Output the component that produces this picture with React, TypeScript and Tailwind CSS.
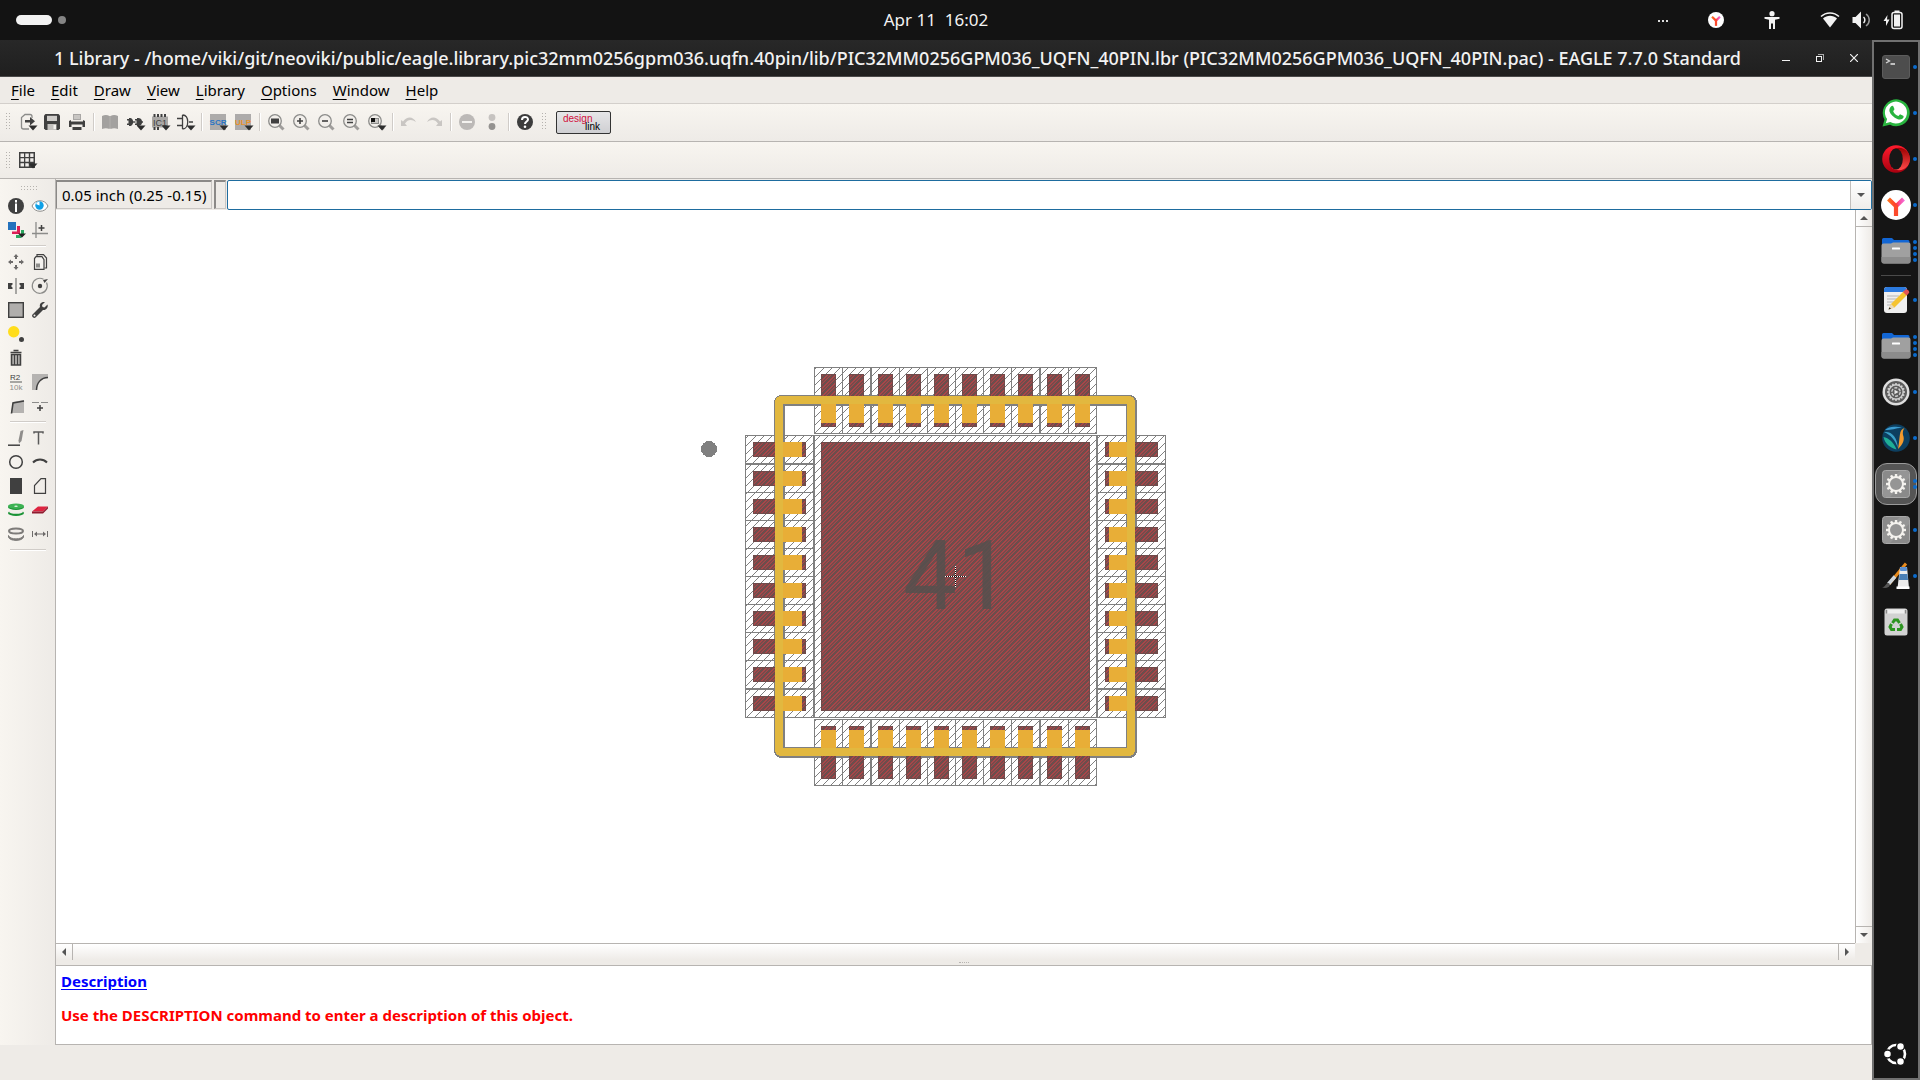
import React from "react";

type Kids = { children?: React.ReactNode };

const dark = "#404040";
const mid = "#8c8c8a";

/* ---------- shared pieces ---------- */

function Icon({ children }: Kids) {
  return (
    <svg viewBox="0 0 16 16" className="size-4 shrink-0 overflow-visible" fill="none" aria-hidden="true">
      {children}
    </svg>
  );
}

function Caret() {
  return <path d="M9.5 11.5h9l-4.5 5z" fill="#2d2d2d" />;
}

function ToolButton({ label, children }: Kids & { label: string }) {
  return (
    <button type="button" aria-label={label} className="flex h-6 w-[25px] shrink-0 items-center pl-1">
      <Icon>{children}</Icon>
    </button>
  );
}

function Separator() {
  return (
    <div className="flex h-[18px] w-2 shrink-0 justify-center">
      <div className="w-0.5 border-r border-l border-r-white border-l-[#d0ccc8]" />
    </div>
  );
}

function Handle() {
  return (
    <svg className="h-[17px] w-[5px] shrink-0" viewBox="0 0 5 17" aria-hidden="true" shapeRendering="crispEdges">
      {[0, 3, 6, 9, 12, 15].map((y) => (
        <path key={y} d={`M0 ${y}h1v1h-1zM3 ${y}h1v1h-1z`} fill="#b5b2ae" />
      ))}
    </svg>
  );
}

function Magnifier({ children }: Kids) {
  return (
    <>
      <path d="M11.5 11.5l4 4" stroke="#a09e9c" strokeWidth="3" />
      <circle cx="7" cy="7" r="6.3" stroke={mid} strokeWidth="1.3" fill="#f2efeb" />
      {children}
    </>
  );
}

/* ---------- top bar ---------- */

function YandexMark({ id, className }: { id: string; className: string }) {
  return (
    <svg viewBox="0 0 30 30" className={className} aria-hidden="true">
      <defs>
        <linearGradient id={id} x1="6" y1="8" x2="24" y2="8" gradientUnits="userSpaceOnUse">
          <stop offset="0" stopColor="#ff7a1a" />
          <stop offset="0.5" stopColor="#ff3b2f" />
          <stop offset="0.7" stopColor="#f94fa0" />
          <stop offset="1" stopColor="#f472e0" />
        </linearGradient>
      </defs>
      <circle cx="15" cy="15" r="15" fill="#fff" />
      <path d="M7.5 9l7.5 7.2L22.5 9" fill="none" stroke={`url(#${id})`} strokeWidth="4.2" />
      <path d="M15 15v11" fill="none" stroke="#fc4a2c" strokeWidth="4.2" />
    </svg>
  );
}

function TopBar() {
  return (
    <header className="grid h-10 shrink-0 grid-cols-[1fr_auto_1fr] items-center bg-[#131313] text-[#f2f2f2]">
      <div className="flex items-center gap-1.5 pl-4">
        <span className="h-2.5 w-9 rounded-full bg-[#f2f2f2]" />
        <span className="size-2 rounded-full bg-[#858585]" />
      </div>
      <time className="pr-12 font-['Noto_Sans'] text-[17px] leading-6 whitespace-pre">Apr 11  16:02</time>
      <div className="flex items-center justify-end pr-[17px]">
        <span className="mr-10 flex gap-0.5 pt-0.5">
          <i className="size-0.5 bg-[#ddd]" />
          <i className="size-0.5 bg-[#ddd]" />
          <i className="size-0.5 bg-[#ddd]" />
        </span>
        <YandexMark id="tray-y" className="mr-10 size-4" />
        <svg viewBox="0 0 16 18" className="mr-10 h-[18px] w-4" fill="#f2f2f2" aria-hidden="true">
          <circle cx="8" cy="2.7" r="2.6" />
          <path d="M0.5 6h15v1.800l-4.500 1V18H9v-5.500H7V18H5V8.800l-4.500-1z" />
        </svg>
        <svg viewBox="0 0 20 16" className="mr-3 h-4 w-5" fill="none" aria-hidden="true">
          <path d="M1 4.500C6-0.300 14-0.300 19 4.500" stroke="#f2f2f2" strokeWidth="1.5" />
          <path d="M3 6.500c4-3.800 10-3.800 14 0L10 15.500z" fill="#f2f2f2" />
        </svg>
        <svg viewBox="0 0 19 18" className="mr-3 h-[18px] w-[19px]" fill="none" aria-hidden="true">
          <path d="M0.500 6h3L9 0.500v17L3.500 12h-3z" fill="#f2f2f2" />
          <path d="M11.500 6c1.800 1.500 1.800 4.500 0 6" stroke="#f2f2f2" strokeWidth="1.5" />
          <path d="M14 3c4.300 3 4.300 9 0 12" stroke="#9a9a9a" strokeWidth="1.5" />
        </svg>
        <svg viewBox="0 0 20 20" className="h-5 w-5" fill="none" aria-hidden="true">
          <path d="M4.500 5L0.500 11h2.500v5l3.500-6.500H4z" fill="#f2f2f2" />
          <path d="M11.500 0.500h5v2h-5z" fill="#f2f2f2" />
          <rect x="9" y="2.500" width="10" height="16" rx="2" stroke="#f2f2f2" strokeWidth="1.5" />
          <rect x="11" y="4.500" width="6" height="12" fill="#f2f2f2" />
        </svg>
      </div>
    </header>
  );
}

/* ---------- window header ---------- */

function TitleBar() {
  return (
    <div className="flex h-[37px] shrink-0 items-center border-b border-[#4a4a4a] bg-linear-to-b from-[#282828] to-[#1f1f1f] text-[#f2f2f2]">
      <h1 className="min-w-0 flex-1 pl-[54px] font-['Noto_Sans'] text-[18px] leading-6 font-medium whitespace-nowrap">
        1 Library - /home/viki/git/neoviki/public/eagle.library.pic32mm0256gpm036.uqfn.40pin/lib/PIC32MM0256GPM036_UQFN_40PIN.lbr
        (PIC32MM0256GPM036_UQFN_40PIN.pac) - EAGLE 7.7.0 Standard
      </h1>
      <div className="flex w-24 shrink-0 items-center justify-between pr-2">
        <button type="button" aria-label="Minimize" className="flex h-5 w-5 items-center justify-center">
          <span className="mt-[5px] h-px w-2 bg-[#f2f2f2]" />
        </button>
        <button type="button" aria-label="Restore" className="flex h-5 w-5 items-center justify-center">
          <svg viewBox="0 0 8 8" className="size-2" fill="none" aria-hidden="true" shapeRendering="crispEdges">
            <path d="M2 0.500h5.500V6" stroke="#aaa" />
            <rect x="0.500" y="2.500" width="5" height="5" stroke="#f2f2f2" />
          </svg>
        </button>
        <button type="button" aria-label="Close" className="flex h-5 w-5 items-center justify-center">
          <svg viewBox="0 0 8 8" className="size-2" aria-hidden="true">
            <path d="M0 0l8 8M8 0L0 8" stroke="#f2f2f2" strokeWidth="1.2" />
          </svg>
        </button>
      </div>
    </div>
  );
}

const menus = ["File", "Edit", "Draw", "View", "Library", "Options", "Window", "Help"];

function MenuBar() {
  return (
    <nav className="flex h-[27px] shrink-0 items-center gap-4 border-b border-[#d3cfcb] bg-[#eeebe7] pl-[11px] font-['Noto_Sans'] text-[15px] leading-5 text-black">
      {menus.map((m) => (
        <button key={m} type="button">
          <span className="underline underline-offset-3">{m[0]}</span>
          {m.slice(1)}
        </button>
      ))}
    </nav>
  );
}

function ActionToolbar() {
  return (
    <div className="flex h-[38px] shrink-0 items-center border-b border-[#b7b4b1] bg-linear-to-b from-[#f8f5f0] to-[#eeebe7] pb-0.5 pl-1.5">
      <Handle />
      <div className="w-1 shrink-0" />
      <ToolButton label="Open">
        <path d="M13 4V2.500a2 2 0 0 0-2-2H6L2.500 3.500v9.500a2 2 0 0 0 2 2H10" stroke={mid} strokeWidth="1.3" />
        <path d="M6 6h5V3l5 4.200-5 4.300V8.500H6z" fill={dark} />
        <Caret />
      </ToolButton>
      <ToolButton label="Save">
        <path d="M1.500 0h13L16 1.500v13L14.500 16h-13L0 14.500v-13z" fill={dark} />
        <path d="M3 1.800h10V7H3z" fill="#cfcdca" />
        <path d="M3.500 10h9v6h-9z" fill="#c4c2bf" />
        <path d="M9.500 11h2.500v4H9.500z" fill="#f4f2ef" />
      </ToolButton>
      <ToolButton label="Print">
        <path d="M4 0h8v6H4z" fill="#a9a7a5" />
        <path d="M5 2h6M5 4h6" stroke="#e8e5e1" />
        <path d="M0 7l2-1v1.500h12V6l2 1v6h-2.500v-2.500h-11V13H0z" fill={dark} />
        <path d="M3.500 13h9v3h-9z" fill={dark} />
      </ToolButton>
      <Separator />
      <ToolButton label="Use library">
        <path d="M0 2Q4 0 7.500 2v13Q4 13.500 0 15zM8.500 2Q12 0 16 2v13q-4-1.500-7.500 0z" fill="#a3a19f" />
        <path d="M8 2v12.500" stroke="#8b8987" />
      </ToolButton>
      <ToolButton label="Device">
        <path d="M0 5h2V4h1.500C7 4.500 7 11.500 3.500 12H2v-1H0V9.500h1.500v-3H0z" fill={dark} />
        <path d="M5.500 7.300h3v1.400h-3z" fill={dark} />
        <path d="M8 5h2V4h1.500c3 0.300 3.500 2.500 3.500 3.300h1v1.400h-1C15 9.500 14.500 11.700 11.500 12H10v-1H8V9.500h1.500v-3H8z" fill={dark} />
        <Caret />
      </ToolButton>
      <ToolButton label="Package">
        <path d="M0 2.500h16v11H0z" fill="#a9a7a5" />
        <path d="M2.500 0v3M6 0v3M9.500 0v3M13 0v3M2.500 13v3M6 13v3" stroke={dark} strokeWidth="2" />
        <text x="8" y="11.500" textAnchor="middle" fontSize="9" fontFamily="Liberation Sans" fill={dark}>
          IC1
        </text>
        <Caret />
      </ToolButton>
      <ToolButton label="Symbol">
        <path d="M0 4.500h5M0 11.500h5M5.500 1v14M5.500 1c7-0.500 7 14 0 14M12 8h4" stroke={dark} strokeWidth="1.3" />
        <Caret />
      </ToolButton>
      <Separator />
      <ToolButton label="Run script">
        <path d="M0 0h16v16H0z" fill="#adabaa" />
        <text x="8" y="11" textAnchor="middle" fontSize="8" fontWeight="bold" fontFamily="Liberation Sans" fill="#2874c5">
          SCR
        </text>
        <Caret />
      </ToolButton>
      <ToolButton label="Run ULP">
        <path d="M0 0h16v16H0z" fill="#adabaa" />
        <text x="8" y="11" textAnchor="middle" fontSize="8" fontWeight="bold" fontFamily="Liberation Sans" fill="#e8912a">
          ULP
        </text>
        <Caret />
      </ToolButton>
      <Separator />
      <ToolButton label="Zoom to fit">
        <Magnifier>
          <rect x="3" y="4.500" width="8" height="5" fill={dark} />
        </Magnifier>
      </ToolButton>
      <ToolButton label="Zoom in">
        <Magnifier>
          <path d="M4 7h6M7 4v6" stroke={dark} strokeWidth="1.6" />
        </Magnifier>
      </ToolButton>
      <ToolButton label="Zoom out">
        <Magnifier>
          <path d="M4 7h6" stroke={dark} strokeWidth="1.6" />
        </Magnifier>
      </ToolButton>
      <ToolButton label="Redraw">
        <Magnifier>
          <path d="M4 5.500h6M4 8.500h6" stroke={dark} strokeWidth="1.5" />
        </Magnifier>
      </ToolButton>
      <ToolButton label="Zoom select">
        <Magnifier>
          <rect x="3.500" y="4.500" width="7" height="5" fill="#c9c7c4" stroke={mid} />
          <rect x="3" y="4" width="4" height="4" fill="#111" />
        </Magnifier>
        <Caret />
      </ToolButton>
      <Separator />
      <ToolButton label="Undo">
        <path d="M0 6v6h6L4 9.500C7 5 11 5 15 8 12 2 6 2 2 7.500z" fill="#c9c6c3" />
      </ToolButton>
      <ToolButton label="Redo">
        <path d="M16 6v6h-6l2-2.500C9 5 5 5 1 8 4 2 10 2 14 7.500z" fill="#c9c6c3" />
      </ToolButton>
      <Separator />
      <ToolButton label="Stop">
        <circle cx="8" cy="8" r="8" fill="#bcb9b7" />
        <path d="M3 8h10" stroke="#f4f2ef" strokeWidth="2" />
      </ToolButton>
      <ToolButton label="Go">
        <circle cx="8" cy="3.500" r="3.4" fill="#c6c3c0" />
        <circle cx="8" cy="12.500" r="3.4" fill="#949290" />
      </ToolButton>
      <Separator />
      <ToolButton label="Help">
        <circle cx="8" cy="8" r="8" fill="#3d3d3d" />
        <path d="M5 6c0-4 6-4 6-0.500 0 2-3 2-3 4.500" stroke="#fff" strokeWidth="2" />
        <circle cx="8" cy="12.800" r="1.3" fill="#fff" />
      </ToolButton>
      <div className="w-1 shrink-0" />
      <Handle />
      <button
        type="button"
        className="relative mt-0.5 ml-[9px] h-[23px] w-[55px] shrink-0 rounded-xs border border-[#333] bg-linear-to-b from-[#e6e6e8] to-[#cfcfd2] font-['Liberation_Sans'] text-[10px] leading-none"
      >
        <span className="absolute top-0.5 left-1.5 text-[#d2103c]">design</span>
        <span className="absolute right-2.5 bottom-px text-black">link</span>
      </button>
    </div>
  );
}

function ParameterToolbar() {
  return (
    <div className="flex h-[37px] shrink-0 items-center border-b border-[#b7b4b1] bg-linear-to-b from-[#f8f5f0] to-[#eeebe7] pl-1.5">
      <Handle />
      <div className="w-1 shrink-0" />
      <ToolButton label="Grid">
        <path d="M0 0h16v16H0z" fill={dark} />
        <path
          d="M1.500 1.500h3.500v3.500h-3.500zM6.300 1.500h3.500v3.500h-3.500zM11.200 1.500h3.300v3.500h-3.300zM1.500 6.300h3.500v3.500h-3.500zM6.300 6.300h3.500v3.500h-3.500zM11.200 6.300h3.300v3.500h-3.300zM1.500 11.200h3.500v3.300h-3.500zM6.300 11.200h3.500v3.300h-3.500z"
          fill="#f0edea"
        />
        <Caret />
      </ToolButton>
    </div>
  );
}

/* ---------- left tool palette ---------- */

type Tool = { label: string; art: React.ReactNode } | null;

const toolGroups: Tool[][] = [
  [
    {
      label: "Info",
      art: (
        <>
          <circle cx="8" cy="8" r="8" fill={dark} />
          <path d="M8 2v2.500M8 5.500V14" stroke="#fff" strokeWidth="2" />
        </>
      ),
    },
    {
      label: "Show",
      art: (
        <>
          <path d="M0 8C3 1 13 1 16 8 13 15 3 15 0 8z" fill="#fff" stroke={mid} />
          <circle cx="7.500" cy="7.500" r="4.2" fill="#0fa0e6" />
          <path d="M7.500 7.500V3.500A4 4 0 0 0 4 6z" fill="#fff" />
        </>
      ),
    },
    {
      label: "Display",
      art: (
        <>
          <path d="M0 0h8v8H0z" fill="#2472bd" />
          <path d="M9 4h3v8H4V9.500h5z" fill="#dc1f55" />
          <path d="M13 8h3v5l-3 3H8v-3h5z" fill="#2aa860" />
          <path d="M10 11.500h8l-4 4z" fill="#222" />
        </>
      ),
    },
    {
      label: "Mark",
      art: (
        <>
          <path d="M4 0v16M0 11.500h16" stroke={mid} strokeWidth="1.3" />
          <path d="M9.500 3v6M6.500 6h6" stroke={dark} strokeWidth="1.5" />
        </>
      ),
    },
  ],
  [
    {
      label: "Move",
      art: (
        <path
          d="M8 0l2.500 3H9v2H7V3H5.500zM8 16l2.500-3H9v-2H7v2H5.500zM0 8l3-2.500V7h2v2H3v1.500zM16 8l-3-2.500V7h-2v2h2v1.500z"
          fill="#6d6b6a"
        />
      ),
    },
    {
      label: "Copy",
      art: (
        <>
          <path d="M5 2.500V0.700h6.500L14.500 4v10h-2" stroke={dark} strokeWidth="1.2" />
          <path d="M2.500 4.500L4 2.700h6l2 3v9.700h-9.500z" fill="#f4f2ef" stroke={dark} strokeWidth="1.2" />
          <path d="M4 9.500h4v4H4z" fill={mid} />
        </>
      ),
    },
    {
      label: "Mirror",
      art: (
        <>
          <path d="M8 0v16" stroke={mid} strokeWidth="1.5" />
          <path d="M0 5h4.500v1.500L3 8l1.500 1.500V11H0zM16 5h-4.500v1.500L13 8l-1.500 1.500V11H16z" fill={dark} />
        </>
      ),
    },
    {
      label: "Rotate",
      art: (
        <>
          <path d="M14.500 4.500A7.500 7.500 0 1 1 11.500 1.300" stroke={mid} strokeWidth="1.2" />
          <circle cx="8" cy="8" r="2.2" fill={dark} />
          <path d="M11 2l5-1-3.500 4z" fill={dark} />
        </>
      ),
    },
    {
      label: "Group",
      art: <rect x="0.700" y="0.700" width="14.600" height="14.600" fill="#b0aeac" stroke={dark} strokeWidth="1.4" />,
    },
    {
      label: "Change",
      art: (
        <path
          d="M15.500 2.500L12.500 5.500 10.500 5 10 3 13 0C10 -0.500 7 1.500 8 5L0.500 12.500c-1.500 2 1.500 4.500 3 3L11 8c3 0.500 5.500-2.500 4.500-5.500zM2.500 12.500a1 1 0 1 1 0 2 1 1 0 0 1 0-2z"
          fill={dark}
          fillRule="evenodd"
        />
      ),
    },
    {
      label: "Paste",
      art: (
        <>
          <circle cx="5.700" cy="5.700" r="5.7" fill="#ffdd1c" />
          <circle cx="13.500" cy="13.500" r="2.5" fill={dark} />
        </>
      ),
    },
    null,
    {
      label: "Delete",
      art: (
        <>
          <path d="M5.500 0.500h5M2.500 2.500h11" stroke={dark} strokeWidth="1.5" />
          <path d="M3.500 4.500h9V15h-9z" fill="#a9a7a5" stroke={dark} strokeWidth="1.5" />
          <path d="M6.500 5v10M9.500 5v10" stroke={dark} />
        </>
      ),
    },
    null,
    {
      label: "Name",
      art: (
        <>
          <text x="7" y="6" textAnchor="middle" fontSize="8" fontFamily="Liberation Sans" fill={dark}>
            R2
          </text>
          <path d="M2 8h12" stroke={mid} strokeWidth="1.5" />
          <text x="8" y="16" textAnchor="middle" fontSize="8" fontFamily="Liberation Sans" fill="#8f8d8b">
            10k
          </text>
        </>
      ),
    },
    {
      label: "Miter",
      art: (
        <>
          <path d="M0 0h16v4C9 4 5 9 5 16H0z" fill="#b5b3b1" />
          <path d="M16 3.500C9 3.500 4.500 9 4.500 16" stroke={dark} strokeWidth="1.5" />
        </>
      ),
    },
    {
      label: "Split",
      art: (
        <>
          <path d="M5 4l11-2v13H3z" fill="#b5b3b1" />
          <path d="M3.500 15.500L5 5 16 3" stroke={dark} strokeWidth="1.6" />
        </>
      ),
    },
    {
      label: "Optimize",
      art: (
        <>
          <path d="M0 4.500h7M9 4.500h7" stroke={mid} strokeWidth="1.2" />
          <path d="M8 7v6M5 10h6" stroke={dark} strokeWidth="1.5" />
        </>
      ),
    },
  ],
  [
    {
      label: "Wire",
      art: (
        <>
          <path d="M0 15.200h12" stroke={dark} strokeWidth="1.5" />
          <path d="M12.500 1l3-1-2 11-2.500 2.500-0.500-3z" fill="#8f8d8b" />
        </>
      ),
    },
    { label: "Text", art: <path d="M2 3.500V2h9v1.500M6.500 2v12.500" stroke="#5a5a5a" strokeWidth="1.5" /> },
    { label: "Circle", art: <circle cx="8" cy="8" r="6.3" stroke={dark} strokeWidth="1.5" /> },
    { label: "Arc", art: <path d="M1 8.500C5 4.500 11 4.500 15 8.500" stroke={dark} strokeWidth="2" /> },
    { label: "Rectangle", art: <path d="M2 0h12v16H2z" fill={dark} /> },
    { label: "Polygon", art: <path d="M2.500 15.300h11V0.700H9L2.500 7.500z" stroke={dark} strokeWidth="1.2" /> },
    {
      label: "Pad",
      art: (
        <>
          <ellipse cx="8" cy="11" rx="8" ry="3" fill="#199235" />
          <ellipse cx="8" cy="9.500" rx="7" ry="2.3" fill="#f1eeea" />
          <ellipse cx="8" cy="5" rx="8" ry="3" fill="#199235" />
          <ellipse cx="8" cy="4.200" rx="8" ry="2.7" fill="#3cb253" />
          <ellipse cx="8" cy="4.200" rx="1.8" ry="0.7" fill="#e0f0e0" />
        </>
      ),
    },
    {
      label: "SMD",
      art: (
        <>
          <path d="M0 9.500l6-5h10l-5 5z" fill="#dd2440" />
          <path d="M0 9.500h11l5-5v2l-5 5H0z" fill="#8f1c30" />
        </>
      ),
    },
    {
      label: "Hole",
      art: (
        <>
          <path d="M0.500 9.500c1 4.500 14 4.500 15 0v1.500c-1 4.500-14 4.500-15 0z" fill="#7d7b79" stroke="#7d7b79" />
          <ellipse cx="8" cy="5" rx="7" ry="2.6" fill="#f1eeea" stroke="#7d7b79" strokeWidth="2" />
        </>
      ),
    },
    {
      label: "Dimension",
      art: (
        <>
          <path d="M0.500 5v6M15.500 5v6M3 8h10" stroke="#6d6b6a" />
          <path d="M2 8l3-2.500v5zM14 8l-3-2.500v5z" fill="#6d6b6a" />
        </>
      ),
    },
  ],
];

function Palette() {
  return (
    <aside className="w-14 shrink-0 border-r border-[#b7b4b1] bg-linear-to-r from-[#f8f5f0] to-[#eeebe7] pl-1">
      <svg className="mt-[7px] ml-[17px] h-2 w-4" viewBox="0 0 16 8" aria-hidden="true" shapeRendering="crispEdges">
        {[0, 3, 6, 9, 12, 15].map((x) => (
          <path key={x} d={`M${x} 0h1v1h-1zM${x} 3h1v1h-1z`} fill="#b5b2ae" />
        ))}
      </svg>
      {toolGroups.map((group, g) => (
        <div key={g} className="w-12">
          <div className="grid grid-cols-2">
            {group.map((tool, i) =>
              tool ? (
                <button key={i} type="button" aria-label={tool.label} className="flex size-6 items-center justify-center">
                  <Icon>{tool.art}</Icon>
                </button>
              ) : (
                <span key={i} />
              ),
            )}
          </div>
          <div className="flex h-2 items-center px-1.5">
            <div className="h-0.5 w-full border-t border-b border-t-[#d0ccc8] border-b-white" />
          </div>
        </div>
      ))}
    </aside>
  );
}

/* ---------- package drawing ---------- */

const xCells = [814, 842, 871, 899, 927, 955, 983, 1011, 1040, 1068];
const yCells = [435, 464, 492, 520, 548, 576, 604, 632, 660, 689];

function Cell({ x, y, w, h }: { x: number; y: number; w: number; h: number }) {
  return <rect x={x + 0.5} y={y + 0.5} width={w} height={h} fill="url(#hatch)" stroke="#808080" />;
}

function Copper({ x, y, w, h }: { x: number; y: number; w: number; h: number }) {
  return (
    <>
      <rect x={x} y={y} width={w} height={h} fill="url(#copper)" />
      <rect x={x + 0.5} y={y + 0.5} width={w - 1} height={h - 1} stroke="#704a4a" fill="none" />
    </>
  );
}

function PackageDrawing() {
  return (
    <svg width="521" height="433" viewBox="695 360 521 433" role="img" aria-label="UQFN 40 pin package" shapeRendering="crispEdges">
      <defs>
        <pattern id="hatch" width="8" height="8" patternUnits="userSpaceOnUse">
          <rect width="8" height="8" fill="#fff" />
          {[0, 1, 2, 3, 4, 5, 6, 7].map((i) => (
            <rect key={i} x={i} y={7 - i} width="1" height="1" fill="#808080" />
          ))}
        </pattern>
        <pattern id="copper" width="8" height="8" patternUnits="userSpaceOnUse">
          <rect width="8" height="8" fill="#6d4d4c" />
          {[0, 1, 2, 3, 4, 5, 6, 7].map((i) => (
            <g key={i} fill="#a84649">
              <rect x={i} y={(9 - i) % 8} width="1" height="1" />
              <rect x={i} y={(10 - i) % 8} width="1" height="1" />
              <rect x={i} y={(13 - i) % 8} width="1" height="1" />
              <rect x={i} y={(12 - i) % 8} width="1" height="1" opacity="0.4" />
            </g>
          ))}
        </pattern>
      </defs>

      {xCells.map((x, i) => {
        const w = i === 1 || i === 7 ? 28 : (xCells[i + 1] ?? 1096) - x;
        return (
          <g key={x}>
            <Cell x={x} y={367} w={w} h={66} />
            <Cell x={x} y={719} w={w} h={66} />
          </g>
        );
      })}
      {yCells.map((y, i) => {
        const h = i === 0 || i === 8 ? 28 : (yCells[i + 1] ?? 717) - y;
        return (
          <g key={y}>
            <Cell x={745} y={y} w={68} h={h} />
            <Cell x={1097} y={y} w={68} h={h} />
          </g>
        );
      })}
      <Cell x={814} y={435} w={282} h={282} />

      <rect x="779.500" y="400.500" width="352" height="352" rx="2" fill="none" stroke="#808080" strokeWidth="11" />

      {xCells.map((x) => (
        <g key={x}>
          <Copper x={x + 7} y={374} w={15} h={53} />
          <Copper x={x + 7} y={726} w={15} h={53} />
          <rect x={x + 7} y={396} width="15" height="27" fill="#e8ae37" />
          <rect x={x + 7} y={730} width="15" height="26" fill="#e8ae37" />
        </g>
      ))}
      {yCells.map((y) => (
        <g key={y}>
          <Copper x={753} y={y + 7} w={53} h={15} />
          <Copper x={1105} y={y + 7} w={53} h={15} />
          <rect x={775} y={y + 7} width="27" height="15" fill="#e8ae37" />
          <rect x={1109} y={y + 7} width="26" height="15" fill="#e8ae37" />
        </g>
      ))}
      <rect x="779" y="400" width="352" height="352" rx="2" fill="none" stroke="#e2b83f" strokeWidth="8" />

      <Copper x={821} y={442} w={269} h={269} />
      <text x="903" y="609" fontSize="96" fontFamily="Roboto, sans-serif" fill="#55504e" fillOpacity="0.85">
        41
      </text>
      <circle cx="709" cy="449" r="8" fill="#808080" />
      <path d="M945 576.500h21M955.500 566v21" stroke="#111" />
      <path d="M945 576.500h21M955.500 566v21" stroke="#fff" strokeDasharray="1 1" />
    </svg>
  );
}

/* ---------- editor area ---------- */

function Arrow({ d }: { d: string }) {
  return (
    <svg viewBox="0 0 8 8" className="size-2" aria-hidden="true">
      <path d={d} fill="#555" />
    </svg>
  );
}

function CommandRow() {
  return (
    <div className="flex h-[31px] shrink-0 pt-px font-['Noto_Sans'] text-[15px]">
      <output className="mr-0.5 flex h-[29px] items-center border-t-2 border-r border-b border-l border-t-[#8b8987] border-r-[#c9c6c3] border-b-[#c9c6c3] border-l-[#8b8987] px-[5px] leading-5 whitespace-nowrap text-black">
        0.05 inch (0.25 -0.15)
      </output>
      <div className="mr-px h-[29px] w-3 shrink-0 border-t-2 border-r border-b border-l-2 border-t-[#8b8987] border-r-[#c9c6c3] border-b-[#c9c6c3] border-l-[#8b8987]" />
      <div className="flex min-w-0 flex-1 overflow-hidden rounded-xs border border-[#1e6c9f] bg-white">
        <input aria-label="Command" className="min-w-0 flex-1 px-1 outline-none" />
        <button
          type="button"
          aria-label="Command history"
          className="flex w-[21px] items-center justify-center border-l border-[#c2bfbc] bg-linear-to-b from-white to-[#efedea]"
        >
          <Arrow d="M0 2h8L4 6z" />
        </button>
      </div>
    </div>
  );
}

function Editor() {
  return (
    <section className="flex min-w-0 flex-1 flex-col bg-[#eeebe7]">
      <CommandRow />
      <div className="flex min-h-0 flex-1">
        <div className="flex min-w-0 flex-1 items-center justify-center bg-white">
          <PackageDrawing />
        </div>
        <div className="flex w-[17px] shrink-0 flex-col justify-between border-l border-[#b7b4b1] bg-linear-to-r from-white to-[#eeebe7]">
          <button type="button" aria-label="Scroll up" className="flex h-[17px] items-center justify-center border-b border-[#b7b4b1]">
            <Arrow d="M0 6h8L4 2z" />
          </button>
          <button type="button" aria-label="Scroll down" className="flex h-[17px] items-center justify-center border-t border-[#b7b4b1]">
            <Arrow d="M0 2h8L4 6z" />
          </button>
        </div>
      </div>
      <div className="flex h-[17px] shrink-0 pr-[17px]">
        <div className="flex flex-1 justify-between border-t border-[#b7b4b1] bg-linear-to-b from-white to-[#eeebe7]">
          <button type="button" aria-label="Scroll left" className="flex w-[17px] items-center justify-center border-r border-[#b7b4b1]">
            <Arrow d="M6 0v8L2 4z" />
          </button>
          <button type="button" aria-label="Scroll right" className="flex w-[17px] items-center justify-center border-l border-[#b7b4b1]">
            <Arrow d="M2 0v8l4-4z" />
          </button>
        </div>
      </div>
      <div className="flex h-[5px] shrink-0 items-center justify-center">
        <div className="w-2.5 border-t border-dotted border-[#b7b4b1]" />
      </div>
      <div className="flex h-20 shrink-0 flex-col gap-3.5 border border-l-0 border-[#b7b4b1] bg-white px-[5px] pt-[5px] font-['Noto_Sans'] text-[15px] leading-5 font-bold">
        <a href="#description" className="self-start text-[#0000ff] underline underline-offset-2">
          Description
        </a>
        <p className="text-[#ff0000]">Use the DESCRIPTION command to enter a description of this object.</p>
      </div>
    </section>
  );
}

/* ---------- dock ---------- */

function Folder() {
  return (
    <svg viewBox="0 0 30 28" className="h-7 w-[30px]" aria-hidden="true">
      <path d="M1 2.500A1.500 1.500 0 0 1 2.500 1H11l2 2h14a1.500 1.500 0 0 1 1.500 1.500V10H1z" fill="#1266d4" />
      <path d="M0.500 8.500A2 2 0 0 1 2.500 6.500H10l2-1h15.500a2 2 0 0 1 2 2V24a2.500 2.500 0 0 1-2.500 2.500H3A2.500 2.500 0 0 1 0.500 24z" fill="#a0a0a0" />
      <path d="M0.500 20h29v4A2.500 2.500 0 0 1 27 26.500H3A2.500 2.500 0 0 1 0.500 24z" fill="#8c8c8c" />
      <rect x="11" y="10.500" width="8" height="2" rx="0.5" fill="#fff" />
    </svg>
  );
}

function Gear() {
  const teeth = Array.from({ length: 12 }, (_, i) => i * 30);
  return (
    <svg viewBox="0 0 28 28" className="size-7" aria-hidden="true">
      <rect x="0.500" y="0.500" width="27" height="27" rx="3" fill="#8a8a8a" stroke="#a8a8a8" />
      <path d="M1 17L18 1h6a3 3 0 0 1 3 3v4L8 27H4a3 3 0 0 1-3-3z" fill="#959595" />
      <circle cx="14" cy="14" r="7" fill="none" stroke="#f4f2ee" strokeWidth="2" />
      {teeth.map((a) => (
        <rect key={a} x="12.800" y="4" width="2.400" height="3" fill="#f4f2ee" transform={`rotate(${a} 14 14)`} />
      ))}
    </svg>
  );
}

function Terminal() {
  return (
    <svg viewBox="0 0 28 24" className="h-6 w-7" aria-hidden="true">
      <rect x="0.500" y="0.500" width="27" height="23" rx="2.5" fill="#4d4d4d" stroke="#5c5c5c" />
      <path d="M4 4l3.500 2L4 8" fill="none" stroke="#d6d6d6" strokeWidth="1.3" />
      <path d="M8.500 9h4.500" stroke="#fff" strokeWidth="1.3" />
    </svg>
  );
}

function WhatsApp() {
  return (
    <svg viewBox="0 0 28 28" className="size-7" aria-hidden="true">
      <path d="M0.500 27.500l2-7A13.500 13.500 0 1 1 8 25.800z" fill="#29b43f" />
      <path d="M3.800 24.300l1.300-4.200A11 11 0 1 1 8.300 23z" fill="#fff" />
      <path
        d="M9 7.500c1-1 2-0.800 2.400 0l1 2.500c0.300 0.800-1.200 1.700-1.200 2.200 1 2.400 2.800 4 5.100 4.900 0.700 0 1.500-2 2.200-1.700l2.700 1.300c0.900 0.500 0.300 2.300-0.800 3.100-1.200 0.900-2.800 1-4.600 0.400C11.500 18.600 8.500 15.500 7.500 12.500 7 10.500 7.800 8.600 9 7.500z"
        fill="#29b43f"
      />
    </svg>
  );
}

function Opera() {
  return (
    <svg viewBox="0 0 28 28" className="size-7" aria-hidden="true">
      <defs>
        <linearGradient id="op-a" x1="0" y1="0" x2="0" y2="1">
          <stop offset="0" stopColor="#ff1b2d" />
          <stop offset="1" stopColor="#a8000f" />
        </linearGradient>
        <linearGradient id="op-b" x1="0" y1="0" x2="0" y2="1">
          <stop offset="0" stopColor="#9c0000" />
          <stop offset="1" stopColor="#ff4b4b" />
        </linearGradient>
      </defs>
      <circle cx="14" cy="14" r="13.8" fill="url(#op-a)" />
      <path d="M10 5c9-6 18 1 18 9s-9 15-18 9z" fill="url(#op-b)" />
      <ellipse cx="14" cy="14" rx="6.8" ry="10.5" fill="#171717" />
    </svg>
  );
}

function Notes() {
  return (
    <svg viewBox="0 0 28 28" className="size-7" aria-hidden="true">
      <rect x="2" y="1" width="23" height="26" rx="3" fill="#efefef" />
      <path d="M2 6V4a3 3 0 0 1 3-3h17a3 3 0 0 1 3 3v2z" fill="#2c7be0" />
      <path d="M5 10h12M5 13h10M5 16h8M5 19h6" stroke="#b5b5b5" />
      <path d="M6.500 23.500L9 18 22 5l3.500 3.500-13 13z" fill="#f6c431" />
      <path d="M9 18l3.500 3.500-6 2z" fill="#e9d9bd" />
      <path d="M21 6l2.500-2.500c1.500-1 4.500 2 3.500 3.500L24.500 9.500z" fill="#e25555" />
      <path d="M6.500 23.500l1-2.300 1.500 1.500z" fill="#222" />
    </svg>
  );
}

function Dial() {
  const teeth = Array.from({ length: 16 }, (_, i) => i * 22.5);
  return (
    <svg viewBox="0 0 28 28" className="size-7" aria-hidden="true">
      <circle cx="14" cy="14" r="13.5" fill="#dedede" />
      <circle cx="14" cy="14" r="11" fill="#5c5c5c" />
      <circle cx="14" cy="14" r="7.2" fill="none" stroke="#cfcfcf" strokeWidth="1.4" />
      {teeth.map((a) => (
        <rect key={a} x="13.2" y="5" width="1.6" height="2.200" fill="#cfcfcf" transform={`rotate(${a} 14 14)`} />
      ))}
      <circle cx="14" cy="14" r="4.2" fill="none" stroke="#cfcfcf" strokeWidth="1.4" strokeDasharray="3 1.4" />
      <path d="M12.500 11.800l4 2.200-4 2.200z" fill="#e8e8e8" />
    </svg>
  );
}

function Swoosh() {
  return (
    <svg viewBox="0 0 28 28" className="size-7" aria-hidden="true">
      <circle cx="14" cy="14" r="13.8" fill="#0d3f60" />
      <path d="M3 6C8 1 15 3 20 3.500 13 4.500 10 6 3 6z" fill="#3b9bd0" />
      <path d="M2 8c8-1 13 5 14 16C13 16 9 11 2 8z" fill="#3aa0c8" />
      <path d="M1.500 13c5 1 10 5 13 12.500C8 23.500 3 20 1.500 13z" fill="#1fae96" />
      <path d="M22.500 4c-6 2-4 8-6.500 21 5-5 7-9 5-14-0.500-2.500 0-5 1.500-7z" fill="#f49a2c" />
    </svg>
  );
}

function Paint() {
  return (
    <svg viewBox="0 0 30 28" className="h-7 w-[30px]" aria-hidden="true">
      <path d="M25 1.500L8 22" stroke="#e88a1c" strokeWidth="3" />
      <path d="M14 14.500L7.500 22" stroke="#cfd6dc" strokeWidth="3.5" />
      <path d="M1 25.500c3 0 3.500-4 6-4.500 2 0 2.500 2.500 0.500 4-2 1.200-4.500 1-6.500 0.500z" fill="#555" />
      <path d="M19 5h7l2 21H16.500z" fill="#ececec" />
      <path d="M18.500 12h8l0.500 6h-9z" fill="#4a7fb5" />
      <rect x="19" y="5" width="7" height="4" rx="1" fill="#5a8fd0" />
      <rect x="15.500" y="24.500" width="13" height="2.500" fill="#fff" />
    </svg>
  );
}

function Trash() {
  return (
    <svg viewBox="0 0 24 28" className="h-7 w-6" aria-hidden="true">
      <rect x="0.500" y="0.500" width="23" height="27" rx="2.5" fill="#d2d2d2" />
      <path d="M3 1.500h18v4H3z" fill="#efefef" />
      <path d="M2.500 2v3.500M21.500 2v3.500" stroke="#8c8c8c" strokeWidth="1.5" />
      <g fill="none" stroke="#2d9420" strokeWidth="3">
        <path d="M8.500 15l2-3h3l2 3" />
        <path d="M16.500 16l1.500 3-1.500 2.500h-3.500" />
        <path d="M11 21.500H7.500L6 19l1.500-3" />
      </g>
    </svg>
  );
}

function Ubuntu() {
  return (
    <svg viewBox="0 0 24 24" className="size-6" aria-hidden="true">
      <circle cx="12" cy="12" r="9" fill="none" stroke="#fff" strokeWidth="2.6" />
      <g fill="#fff" stroke="#151515" strokeWidth="1.5">
        <circle cx="3.500" cy="12" r="4" />
        <circle cx="16.500" cy="4.500" r="4" />
        <circle cx="16.500" cy="19.500" r="4" />
      </g>
    </svg>
  );
}

type DockEntry = { label: string; art: React.ReactNode; dots: number; active?: boolean; rule?: boolean };

const dock: DockEntry[] = [
  { label: "Terminal", art: <Terminal />, dots: 1 },
  { label: "WhatsApp", art: <WhatsApp />, dots: 1 },
  { label: "Opera", art: <Opera />, dots: 1 },
  { label: "Yandex", art: <YandexMark id="dock-y" className="size-[30px]" />, dots: 1 },
  { label: "Files", art: <Folder />, dots: 4, rule: true },
  { label: "Text Editor", art: <Notes />, dots: 1 },
  { label: "Folder", art: <Folder />, dots: 4 },
  { label: "Dial", art: <Dial />, dots: 1 },
  { label: "Swoosh", art: <Swoosh />, dots: 1 },
  { label: "EAGLE", art: <Gear />, dots: 2, active: true },
  { label: "Application", art: <Gear />, dots: 1 },
  { label: "Paint", art: <Paint />, dots: 1 },
  { label: "Trash", art: <Trash />, dots: 0 },
];

function Dock() {
  return (
    <aside className="flex w-12 shrink-0 flex-col border-2 border-[#707070] bg-[#151515] pt-0.5 pb-3">
      {dock.map((d) => (
        <React.Fragment key={d.label}>
          <button type="button" aria-label={d.label} className="relative flex h-[46px] shrink-0 items-center justify-center">
            <span
              className={
                d.active
                  ? "flex size-[42px] items-center justify-center rounded-xl border border-[#9a9a9a] bg-[#555]"
                  : "flex size-[42px] items-center justify-center"
              }
            >
              {d.art}
            </span>
            <span className="absolute inset-y-0 right-px flex flex-col items-center justify-center gap-0.5">
              {Array.from({ length: d.dots }, (_, i) => (
                <i key={i} className="size-1 rounded-full bg-[#0a6acb]" />
              ))}
            </span>
          </button>
          {d.rule && <div className="mx-[7px] my-px h-px shrink-0 bg-[#4a4a4a]" />}
        </React.Fragment>
      ))}
      <button type="button" aria-label="Show applications" className="mt-auto flex justify-center">
        <Ubuntu />
      </button>
    </aside>
  );
}

export default function App() {
  return (
    <div className="flex h-screen flex-col overflow-hidden bg-[#131313]">
      <TopBar />
      <div className="flex min-h-0 flex-1">
        <main className="flex min-w-0 flex-1 flex-col bg-[#eeebe7]">
          <TitleBar />
          <MenuBar />
          <ActionToolbar />
          <ParameterToolbar />
          <div className="flex min-h-0 flex-1">
            <Palette />
            <Editor />
          </div>
          <footer className="h-[35px] shrink-0 bg-[#eeebe7]" />
        </main>
        <Dock />
      </div>
    </div>
  );
}
